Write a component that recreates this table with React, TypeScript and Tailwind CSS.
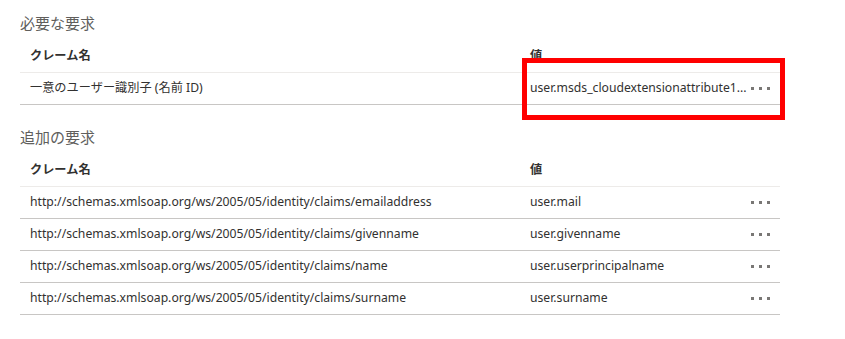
import React from 'react';

interface Claim {
    name: string;
    value: string;
}

const requiredClaims: Claim[] = [
    { name: '一意のユーザー識別子 (名前 ID)', value: 'user.msds_cloudextensionattribute1...' },
];

const additionalClaims: Claim[] = [
    { name: 'http://schemas.xmlsoap.org/ws/2005/05/identity/claims/emailaddress', value: 'user.mail' },
    { name: 'http://schemas.xmlsoap.org/ws/2005/05/identity/claims/givenname', value: 'user.givenname' },
    { name: 'http://schemas.xmlsoap.org/ws/2005/05/identity/claims/name', value: 'user.userprincipalname' },
    { name: 'http://schemas.xmlsoap.org/ws/2005/05/identity/claims/surname', value: 'user.surname' },
];

const MoreDots: React.FC = () => (
    <div className="flex items-center gap-[5px]">
        <span className="w-[3px] h-[3px] bg-[#797775]" />
        <span className="w-[3px] h-[3px] bg-[#797775]" />
        <span className="w-[3px] h-[3px] bg-[#797775]" />
    </div>
);

const ClaimSection: React.FC<{ title: string; claims: Claim[]; className?: string }> = ({ title, claims, className }) => (
    <section className={className}>
        <h2 className="h-[20px] leading-[20px] text-[15px] text-[#605e5c] mb-[7px]">{title}</h2>
        <div className="w-[760px]">
            <div className="flex h-[33px] items-center border-b border-[#edebe9] font-semibold">
                <div className="w-[500px] shrink-0 pl-[10px]">クレーム名</div>
                <div className="flex-1 pl-[10px]">値</div>
            </div>
            {claims.map(c => (
                <div key={c.name} className="flex h-[32px] items-center border-b border-[#c8c6c4]">
                    <div className="w-[500px] shrink-0 pl-[10px] whitespace-nowrap">{c.name}</div>
                    <div className="flex-1 min-w-0 pl-[10px] whitespace-nowrap">{c.value}</div>
                    <div className="w-[37px] shrink-0 flex justify-end pr-[10px]">
                        <MoreDots />
                    </div>
                </div>
            ))}
        </div>
    </section>
);

export default function App() {
    return (
        <div
            className="relative w-[845px] h-[339px] bg-white text-[12.2px] text-[#323130] pl-[20px] pt-[13px]"
            style={{ fontFamily: '"Noto Sans", "Noto Sans CJK JP", sans-serif' }}
        >
            <ClaimSection title="必要な要求" claims={requiredClaims} />
            <ClaimSection title="追加の要求" claims={additionalClaims} className="mt-[22px]" />

            {/* annotation box */}
            <div className="absolute left-[522px] top-[58px] w-[263px] h-[62px] border-[5px] border-[#ff0000]" />
        </div>
    );
}
